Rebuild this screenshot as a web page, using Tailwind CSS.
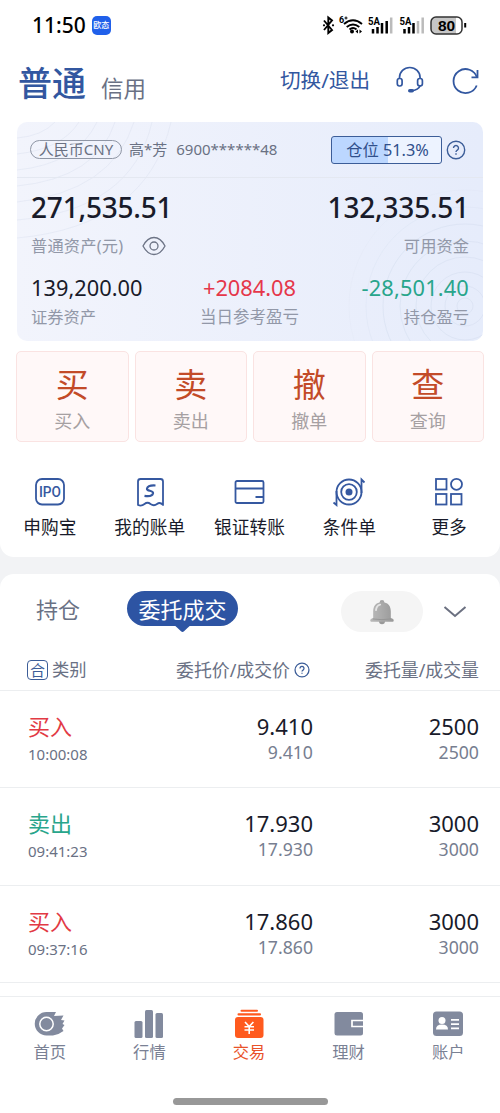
<!DOCTYPE html>
<html lang="zh-CN">
<head>
<meta charset="utf-8">
<meta name="viewport" content="width=device-width, initial-scale=1">
<title>交易</title>
<script src="https://cdn.jsdelivr.net/npm/@tailwindcss/browser@4"></script>
</head>
<body class="w-[500px] h-[1113px] overflow-hidden bg-[#f2f3f5] font-['Noto_Sans','Noto_Sans_CJK_SC',sans-serif] text-[#191b2a] whitespace-nowrap">
<div class="h-[557px] bg-white rounded-b-[14px]">
  <!-- Status bar -->
  <div class="h-[50px] flex items-center pl-[32px] pr-[33px]">
    <span class="text-[21px] leading-[30px] font-medium text-black">11:50</span>
    <span class="ml-[6px] w-[19px] h-[19px] rounded-[5px] bg-[#2060ea] text-white text-[8px] leading-[18px] font-medium text-center">欧态</span>
    <svg class="ml-auto" width="145" height="22" viewBox="322 14 145 22" fill="none" stroke="#000">
      <path d="M324 20.5l8 9.500-3.700 3V17.500l3.700 3-8 9.500" stroke-width="1.900"/>
      <circle cx="324" cy="25.300" r="1.100" fill="#000" stroke="none"/><circle cx="333" cy="25.300" r="1.100" fill="#000" stroke="none"/>
      <text x="339" y="23" font-family="Roboto" font-size="9" font-weight="700" fill="#000" stroke="none">6</text>
      <path d="M344.500 18h3M346 16.500v3" stroke-width="1"/>
      <path d="M344 24q9-7.500 18 0M346.700 27q6.300-5 12.600 0M349.500 29.500q3.500-3 7 0" stroke-width="1.900"/>
      <circle cx="352" cy="31.500" r="2" fill="#000" stroke="none"/>
      <path d="M358 29.500v4l-2.500-2zM359.500 29.500v4l2.500-2z" fill="#000" stroke="none"/>
      <text x="368" y="24.500" font-family="Roboto" font-size="10" font-weight="700" fill="#000" stroke="none" textLength="12" lengthAdjust="spacingAndGlyphs">5A</text>
      <path d="M373 29v4.500M377.500 27v6.500M382 23v10.500M386.700 21v12.500" stroke-width="2.500"/>
      <path d="M391.200 17.500v16" stroke="#bbb" stroke-width="2.500"/>
      <text x="399.500" y="24.500" font-family="Roboto" font-size="10" font-weight="700" fill="#000" stroke="none" textLength="12" lengthAdjust="spacingAndGlyphs">5A</text>
      <path d="M404.500 29v4.500M409 27v6.500M413.500 23v10.500" stroke-width="2.500"/>
      <path d="M418 21v12.500M422.700 17.500v16" stroke="#bbb" stroke-width="2.500"/>
      <rect x="431" y="17" width="31" height="17" rx="5" fill="#fff" stroke="none"/>
      <path d="M436 17h20v17h-20q-5 0-5-5v-7q0-5 5-5z" fill="#c6c6c6" stroke="none"/>
      <rect x="431" y="17" width="31" height="17" rx="5" stroke="#333" stroke-width="1.500"/>
      <path d="M465.200 23v4.500" stroke-width="2"/>
      <text x="446.500" y="31" text-anchor="middle" font-family="Liberation Sans" font-size="15.500" font-weight="700" fill="#000" stroke="none">80</text>
    </svg>
  </div>
  <!-- Account header -->
  <div class="h-[72px] flex items-start pl-[18px] pr-[20px] text-[#3257a0]">
    <h1 class="mt-[12px] text-[34px] leading-[42px] font-medium">普通</h1>
    <span class="ml-[15px] mt-[24px] text-[22.5px] leading-[30px] text-[#6a7184]">信用</span>
    <span class="ml-auto mt-[15px] text-[20.6px] leading-[30px]">切换/退出</span>
    <svg class="ml-[25px] mt-[15px]" width="30" height="30" viewBox="395 65 30 30" fill="none" stroke="#3257a0" stroke-width="1.700">
      <path d="M399.500 79v-1.500a10.300 10 0 0 1 20.600 0v1.500M420.500 85q-2 5.500-9.500 5.500" />
      <rect x="397.300" y="78.500" width="4.800" height="7.500" rx="2.200"/><rect x="417.600" y="78.500" width="4.800" height="7.500" rx="2.200"/>
      <rect x="408" y="89" width="6" height="3.600" rx="1.800" fill="#3257a0" stroke="none"/>
    </svg>
    <svg class="ml-[26px] mt-[15px]" width="29" height="30" viewBox="451 65 29 30" fill="none" stroke="#3257a0" stroke-width="1.800">
      <path d="M476.700 85.500a12 12 0 1 1 .300-8"/><path d="M477.500 70v7.400h-6"/>
    </svg>
  </div>
  <!-- Asset card -->
  <section class="relative mx-[17px] h-[219px] rounded-[10px] overflow-hidden bg-linear-to-r from-[#f2f4fc] to-[#e6ecfb]">
    <svg class="absolute inset-0" width="466" height="219" fill="none" stroke="#dfe5f1" stroke-width="1">
      <g opacity=".6"><path d="M0 16Q25 14 38 0M0 32Q45 27 62 0M0 48Q60 42 80 0M0 64Q80 56 98 0M0 80Q95 70 117 0M0 98Q115 88 135 0M0 116Q130 104 154 0"/></g>
      <g stroke="#dae2f3" opacity=".75"><circle cx="448" cy="184" r="8"/><circle cx="448" cy="184" r="20"/><circle cx="448" cy="184" r="34"/><circle cx="448" cy="184" r="49"/><circle cx="448" cy="184" r="65"/><circle cx="448" cy="184" r="82"/><circle cx="448" cy="184" r="99" opacity=".6"/><circle cx="448" cy="184" r="116" opacity=".3"/></g>
    </svg>
    <div class="relative h-[56px] flex items-center pl-[13px] pr-[17px] border-b border-[#e4e8f1] text-[15px] leading-[20px] text-[#6a7183]">
      <span class="w-[92px] h-[19px] rounded-full border border-[#8f96a5] text-center leading-[17px]">人民币CNY</span>
      <span class="ml-[7px] -mt-[2px]">高*芳</span>
      <span class="ml-[9px] -mt-[2px]">6900******48</span>
      <span class="ml-auto w-[111px] h-[28px] rounded-[3px] border-[1.5px] border-[#3c5d98] bg-linear-to-r from-[#bcd7ff] from-51% to-[#edf3ff] to-51% text-[#304f8b] text-[16.3px] leading-[27px] text-center pl-[2px]">仓位 51.3%</span>
      <svg class="ml-[4px]" width="20" height="20" viewBox="0 0 20 20" fill="none" stroke="#3c5d98" stroke-width="1.400"><circle cx="10" cy="10" r="8.700"/><path d="M7.500 8a2.500 2.500 0 1 1 3.800 2.100q-1.300.8-1.300 1.900"/><path d="M10 13.300v1.500"/></svg>
    </div>
    <div class="relative px-[14px]">
      <div class="h-[58px] flex items-center justify-between text-[28px] leading-[36px] font-medium tracking-[-0.2px]"><span>271,535.51</span><span>132,335.51</span></div>
      <div class="mt-[2px] h-[16px] flex items-center text-[16.300px] leading-[16px] text-[#9298a8]">
        <span class="tracking-[0.15px]">普通资产(元)</span>
        <svg class="ml-[18px]" width="26" height="22" viewBox="0 0 26 22" fill="none" stroke="#6d7486" stroke-width="1.300"><path d="M2 11q4.500-8.500 11-8.500t11 8.500q-4.500 8.500-11 8.500t-11-8.500z"/><circle cx="13" cy="11" r="4"/></svg>
        <span class="ml-auto">可用资金</span>
      </div>
      <div class="mt-[21px] flex justify-between">
        <div class="w-[109px]"><div class="text-[21.8px] leading-[26px]">139,200.00</div><div class="mt-[6px] text-[16.300px] leading-[20px] text-[#9298a8]">证券资产</div></div>
        <div class="text-center"><div class="text-[21.800px] leading-[26px] text-[#e5374a]">+2084.08</div><div class="mt-[6px] text-[16.500px] leading-[20px] text-[#9298a8]">当日参考盈亏</div></div>
        <div class="w-[110px] flex flex-col items-end text-right"><div class="text-[21.800px] leading-[26px] text-[#28a58b] tracking-[0.15px]">-28,501.40</div><div class="mt-[6px] text-[16.300px] leading-[20px] text-[#9298a8]">持仓盈亏</div></div>
      </div>
    </div>
  </section>
  <!-- Trade actions -->
  <div class="mt-[10px] mx-[16px] grid grid-cols-4 gap-[6px] text-center text-[18px] leading-[24px] text-[#a6a0a2]">
    <div class="h-[91px] rounded-[5px] border-[1.5px] border-[#fae3e2] bg-[#fff8f8]"><div class="mt-[13px] text-[33px] leading-[40px] text-[#c34b28]">买</div><div class="mt-[4px]">买入</div></div>
    <div class="h-[91px] rounded-[5px] border-[1.5px] border-[#fae3e2] bg-[#fff8f8]"><div class="mt-[13px] text-[33px] leading-[40px] text-[#c34b28]">卖</div><div class="mt-[4px]">卖出</div></div>
    <div class="h-[91px] rounded-[5px] border-[1.5px] border-[#fae3e2] bg-[#fff8f8]"><div class="mt-[13px] text-[33px] leading-[40px] text-[#c34b28]">撤</div><div class="mt-[4px]">撤单</div></div>
    <div class="h-[91px] rounded-[5px] border-[1.5px] border-[#fae3e2] bg-[#fff8f8]"><div class="mt-[13px] text-[33px] leading-[40px] text-[#c34b28]">查</div><div class="mt-[4px]">查询</div></div>
  </div>
  <!-- Shortcuts -->
  <div class="mt-[34px] grid grid-cols-5 mr-[1px] text-[17.700px] leading-[24px]">
    <div class="flex flex-col items-center gap-[7px]">
      <svg width="34" height="32" viewBox="0 0 34 32" fill="none" stroke="#3558a0" stroke-width="1.800"><rect x="3" y="3" width="28" height="25.500" rx="6"/><text x="17" y="21" text-anchor="middle" font-family="Roboto" font-size="14.500" font-weight="500" fill="#3558a0" stroke="none" textLength="22" lengthAdjust="spacingAndGlyphs">IPO</text></svg>
      <span>申购宝</span></div>
    <div class="flex flex-col items-center gap-[7px]">
      <svg width="34" height="32" viewBox="0 0 34 32" fill="none" stroke="#3558a0" stroke-width="1.800" stroke-linejoin="round"><path d="M5 29V5.500q0-2.500 2.500-2.500h20q2.500 0 2.500 2.500V29q-3-3.500-6-1t-6.500 0q-3-2.500-6 0t-6.500 1z"/><path d="M22.500 9.500q-7.500-.5-8.500 3c-.800 3 6.500 1.500 6 4.700q-.8 3.800-8.500 2.600" stroke-width="2.200"/></svg>
      <span>我的账单</span></div>
    <div class="flex flex-col items-center gap-[7px]">
      <svg width="34" height="32" viewBox="0 0 34 32" fill="none" stroke="#3558a0" stroke-width="1.800"><rect x="3.500" y="5" width="28" height="22" rx="1.500"/><path d="M3.500 12.500h28M23.500 21h8"/></svg>
      <span>银证转账</span></div>
    <div class="flex flex-col items-center gap-[7px]">
      <svg width="34" height="32" viewBox="0 0 34 32" fill="none" stroke="#3558a0" stroke-width="1.800"><circle cx="17" cy="16" r="12.500"/><circle cx="17" cy="16" r="7.800"/><circle cx="17" cy="16" r="3.500" fill="#3558a0" stroke="none"/><path d="M29.500 17V3.500l3 3M4.500 15v14l-3-2.500"/></svg>
      <span>条件单</span></div>
    <div class="flex flex-col items-center gap-[7px]">
      <svg width="34" height="32" viewBox="0 0 34 32" fill="none" stroke="#3558a0" stroke-width="1.800"><rect x="4" y="3" width="10.500" height="10.500"/><circle cx="24.500" cy="8.300" r="5.500"/><rect x="4" y="18" width="10.500" height="10.500"/><rect x="19" y="18" width="10.500" height="10.500"/></svg>
      <span>更多</span></div>
  </div>
</div>

<!-- Orders -->
<div class="mt-[17px] h-[422px] overflow-hidden bg-white rounded-t-[14px]">
  <div class="h-[75px] pt-[17px] flex items-start pl-[36px] pr-[33px] text-[22px]">
    <span class="mt-[3px] leading-[30px] text-[#6a7184]">持仓</span>
    <div class="relative ml-[47px] w-[111px] h-[35px] rounded-full bg-[#2d54a3] text-white text-center leading-[36px]">委托成交
      <svg class="absolute left-[46px] top-[34px]" width="19" height="8" viewBox="0 0 19 8"><path d="M0 0h19q-2 0-4 2.500l-4 3.800q-1.500 1.300-3 0L4 2.500Q2 0 0 0z" fill="#2d54a3"/></svg>
    </div>
    <div class="ml-auto w-[82px] h-[41px] rounded-full bg-[#f5f5f5] flex items-center justify-center">
      <svg width="26" height="28" viewBox="0 0 28 30"><defs><linearGradient id="bell" x2="1"><stop stop-color="#b9b9b9"/><stop offset=".5" stop-color="#aaa"/><stop offset="1" stop-color="#999"/></linearGradient></defs><circle cx="14" cy="4.500" r="2.500" fill="#a5a5a5"/><circle cx="14" cy="25" r="3.200" fill="#999"/><path d="M14 4.500c7 0 9.500 4.500 9.500 10v7l2.500 1q1.500 2.500-.5 3h-23q-2-.5-.5-3l2.500-1v-7c0-5.500 2.500-10 9.500-10z" fill="url(#bell)"/><path d="M7.500 13q.5-5 4.500-6" stroke="#e4e4e4" stroke-width="2" fill="none" stroke-linecap="round"/><path d="M4 22.500q10 1.500 20 0" stroke="#949494" fill="none"/></svg>
    </div>
    <svg class="ml-[20px] mt-[13px]" width="24" height="16" viewBox="0 0 24 16" fill="none" stroke="#6b7080" stroke-width="2"><path d="M1.500 3L12 12 22.500 3"/></svg>
  </div>
  <div class="h-[42px] flex items-center pl-[27px] pr-[21px] border-b border-[#eceef0] text-[17.900px] leading-[24px] text-[#6a7184]">
    <span class="w-[21px] h-[20px] rounded-[4px] border border-[#3c5d98] text-[#3c5d98] text-[15px] leading-[18px] text-center">合</span>
    <span class="ml-[4px] w-[119px] text-[17.300px]">类别</span>
    <span class="w-[119px] text-right">委托价/成交价</span>
    <svg class="ml-[4px]" width="16" height="16" viewBox="0 0 20 20" fill="none" stroke="#3c5d98" stroke-width="1.600"><circle cx="10" cy="10" r="8.700"/><path d="M7.500 8a2.500 2.500 0 1 1 3.800 2.100q-1.300.8-1.300 1.900"/><path d="M10 13.300v1.500"/></svg>
    <span class="ml-auto">委托量/成交量</span>
  </div>
  <div class="h-[97.300px] pt-[20px] flex pl-[28px] pr-[21px] border-b border-[#eceef0] text-[22px] leading-[30px]">
    <div class="w-[143px] text-[#e23a44]">买入<div class="mt-[1px] text-[15px] leading-[24px] text-[#6a7184]">10:00:08</div></div>
    <div class="w-[142px] text-right">9.410<div class="-mt-[1px] text-[17.700px] leading-[24px] text-[#777e90]">9.410</div></div>
    <div class="flex-1 text-right">2500<div class="-mt-[1px] text-[17.700px] leading-[24px] text-[#777e90]">2500</div></div>
  </div>
  <div class="h-[97.300px] pt-[20px] flex pl-[28px] pr-[21px] border-b border-[#eceef0] text-[22px] leading-[30px]">
    <div class="w-[143px] text-[#28a58b]">卖出<div class="mt-[1px] text-[15px] leading-[24px] text-[#6a7184]">09:41:23</div></div>
    <div class="w-[142px] text-right">17.930<div class="-mt-[1px] text-[17.700px] leading-[24px] text-[#777e90]">17.930</div></div>
    <div class="flex-1 text-right">3000<div class="-mt-[1px] text-[17.700px] leading-[24px] text-[#777e90]">3000</div></div>
  </div>
  <div class="h-[97.300px] pt-[20px] flex pl-[28px] pr-[21px] border-b border-[#eceef0] text-[22px] leading-[30px]">
    <div class="w-[143px] text-[#e23a44]">买入<div class="mt-[1px] text-[15px] leading-[24px] text-[#6a7184]">09:37:16</div></div>
    <div class="w-[142px] text-right">17.860<div class="-mt-[1px] text-[17.700px] leading-[24px] text-[#777e90]">17.860</div></div>
    <div class="flex-1 text-right">3000<div class="-mt-[1px] text-[17.700px] leading-[24px] text-[#777e90]">3000</div></div>
  </div>
</div>

<!-- Bottom navigation -->
<nav class="h-[117px] bg-white border-t border-[#eceef0]">
  <div class="pt-[11px] mr-[2px] grid grid-cols-5 text-[16.300px] leading-[24px] text-[#7a8194]">
    <div class="flex flex-col items-center"><svg width="34" height="32" viewBox="0 0 34 32"><path d="M13.500 4H23l-2 4 9.500-.5-2.500 4.500 3.500.5-2 3.500 2 1-2.500 3.500 1.500 2.500Q26 26.500 20 27.500h-6.500a11.700 11.700 0 0 1 0-23.500z" fill="#828a9e"/><circle cx="13.500" cy="16" r="6.700" fill="none" stroke="#fff" stroke-width="1.500"/></svg><span>首页</span></div>
    <div class="flex flex-col items-center"><svg width="34" height="32" viewBox="0 0 34 32" fill="#828a9e"><rect x="2.500" y="13" width="8" height="17" rx="1.500"/><rect x="13" y="2" width="8" height="28" rx="1.500"/><rect x="23.500" y="5" width="7.500" height="25" rx="1.500"/></svg><span>行情</span></div>
    <div class="flex flex-col items-center text-[#e9532a]"><svg width="34" height="32" viewBox="0 0 34 32" fill="#ff5a1e"><rect x="3" y="9" width="28.500" height="21" rx="3"/><rect x="5.500" y="5.200" width="23.500" height="2.300" rx="1"/><rect x="8.500" y="1.800" width="17.500" height="2" rx="1"/><path d="M13 14l4.200 4.500 4.200-4.500M17.200 18.500v7.500M12.500 18.700h9.500M12.500 22h9.500" fill="none" stroke="#fff" stroke-width="1.600"/></svg><span>交易</span></div>
    <div class="flex flex-col items-center"><svg width="34" height="32" viewBox="0 0 34 32"><rect x="2.500" y="4" width="28.500" height="23.500" rx="2.500" fill="#828a9e"/><path d="M31 12.500H20v6h11" fill="none" stroke="#fff" stroke-width="1.700"/></svg><span>理财</span></div>
    <div class="flex flex-col items-center"><svg width="34" height="32" viewBox="0 0 34 32"><rect x="2" y="3.500" width="30" height="24.500" rx="3.500" fill="#828a9e"/><circle cx="11" cy="12.500" r="3.500" fill="#fff"/><path d="M5 21.500q0-5 6-5t6 5zM20 11h8v1.700h-8zM20 15.200h8v1.700h-8zM20 19.500h8v1.700h-8z" fill="#fff"/></svg><span>账户</span></div>
  </div>
  <div class="mt-[34px] mx-auto w-[155px] h-[7px] rounded-full bg-[#989898]"></div>
</nav>
</body>
</html>
